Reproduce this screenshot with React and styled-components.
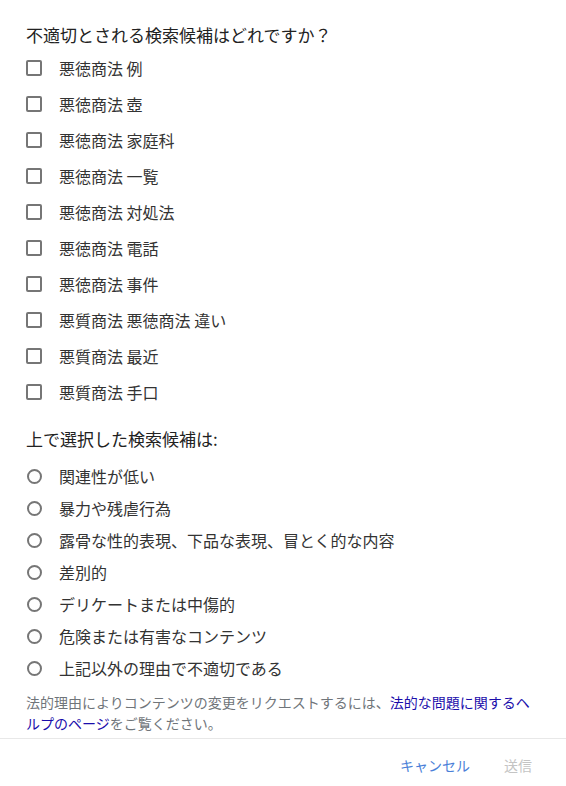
import React from 'react';
import styled, { createGlobalStyle } from "styled-components";

const GlobalStyle = createGlobalStyle`
	body {
		margin: 0;
		background: #fff;
		font-family: "Noto Sans CJK JP", "Noto Sans", sans-serif;
		color: #222;
	}
`

const Dialog = styled.div`
	width: 566px;
	box-sizing: border-box;
`

const Body = styled.div`
	padding: 23px 26px 0;
`

const Title = styled.div`
	font-size: 17px;
	line-height: 24px;
	color: #222;
`

const List = styled.div`
	display: flex;
	flex-direction: column;
	margin-top: ${p => p.$top}px;
`

const Row = styled.label`
	display: flex;
	align-items: center;
	height: ${p => p.$h}px;
	font-size: 16px;
	color: #333;
	cursor: pointer;
`

const Box = styled.span`
	flex: none;
	width: 16px;
	height: 16px;
	box-sizing: border-box;
	border: 2px solid #767676;
	border-radius: ${p => (p.$round ? '50%' : '2px')};
	margin-right: 17px;
	margin-left: ${p => (p.$round ? '1px' : '0')};
	${p => p.$round && 'width: 15px; height: 15px; margin-right: 17px;'}
`

const Heading = styled.div`
	margin-top: 17px;
	font-size: 17px;
	line-height: 24px;
	color: #222;
`

const Note = styled.p`
	margin: 8px 0 4px;
	font-size: 14px;
	line-height: 21px;
	color: #70757a;
`

const Link = styled.a`
	color: #1a0dab;
	text-decoration: none;
`

const Footer = styled.div`
	display: flex;
	justify-content: flex-end;
	gap: 18px;
	border-top: 1px solid #e8e8e8;
	padding: 8px 26px 12px;
`

const Button = styled.button`
	height: 36px;
	padding: 0 8px;
	border: none;
	background: none;
	font-family: inherit;
	font-size: 14px;
	color: ${p => (p.disabled ? '#c4c4c4' : '#4a7fd8')};
	cursor: ${p => (p.disabled ? 'default' : 'pointer')};
`

const suggestions = [
	'悪徳商法 例',
	'悪徳商法 壺',
	'悪徳商法 家庭科',
	'悪徳商法 一覧',
	'悪徳商法 対処法',
	'悪徳商法 電話',
	'悪徳商法 事件',
	'悪質商法 悪徳商法 違い',
	'悪質商法 最近',
	'悪質商法 手口',
]

const reasons = [
	'関連性が低い',
	'暴力や残虐行為',
	'露骨な性的表現、下品な表現、冒とく的な内容',
	'差別的',
	'デリケートまたは中傷的',
	'危険または有害なコンテンツ',
	'上記以外の理由で不適切である',
]

const App = () => {
	return (
		<Dialog>
			<GlobalStyle/>
			<Body>
				<Title>不適切とされる検索候補はどれですか？</Title>
				<List $top={3}>
					{suggestions.map(s => (
						<Row key={s} $h={36}>
							<Box/>
							{s}
						</Row>
					))}
				</List>

				<Heading>上で選択した検索候補は:</Heading>
				<List $top={9}>
					{reasons.map(r => (
						<Row key={r} $h={32}>
							<Box $round/>
							{r}
						</Row>
					))}
				</List>

				<Note>
					法的理由によりコンテンツの変更をリクエストするには、<Link href="#">法的な問題に関するヘルプのページ</Link>をご覧ください。
				</Note>
			</Body>
			<Footer>
				<Button>キャンセル</Button>
				<Button disabled>送信</Button>
			</Footer>
		</Dialog>
	);
}

export default App
